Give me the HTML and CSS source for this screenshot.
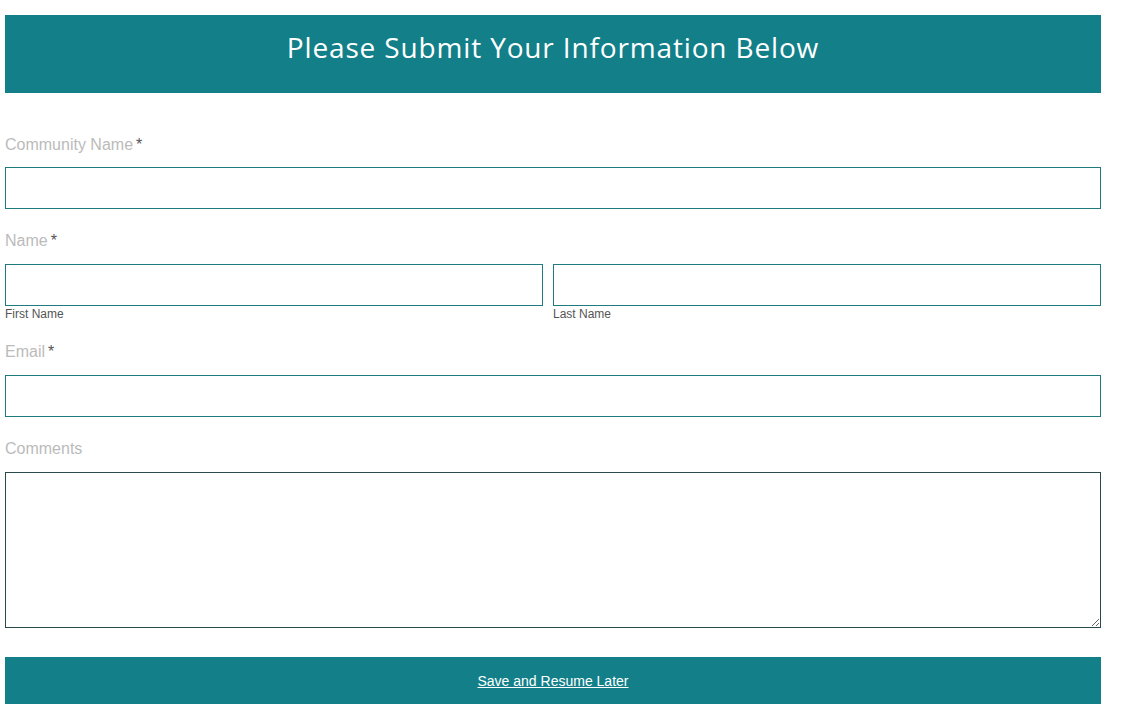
FILE: index.html
```html
<!DOCTYPE html>
<html lang="en">
<head>
    <meta charset="UTF-8">
    <meta name="viewport" content="width=device-width, initial-scale=1.0">
    <title>Submit Your Information</title>
    <link rel="stylesheet" href="styles.css">
</head>
<body>

    <div class="page">
        <div class="form-header">
            <h2>Please Submit Your Information Below</h2>
        </div>

        <form id="infoForm" class="info-form">
            <div class="form-group">
                <label for="community">Community Name<span class="req">*</span></label>
                <input type="text" id="community" name="community" required>
            </div>

            <div class="form-group name-group">
                <label for="firstName">Name<span class="req">*</span></label>
                <div class="name-row">
                    <div class="name-part">
                        <input type="text" id="firstName" name="firstName" required>
                        <span class="sub-label">First Name</span>
                    </div>
                    <div class="name-part">
                        <input type="text" id="lastName" name="lastName" required>
                        <span class="sub-label">Last Name</span>
                    </div>
                </div>
            </div>

            <div class="form-group">
                <label for="email">Email<span class="req">*</span></label>
                <input type="email" id="email" name="email" required>
            </div>

            <div class="form-group comments-group">
                <label for="comments">Comments</label>
                <textarea id="comments" name="comments"></textarea>
            </div>

            <div class="save-bar">
                <a href="#" class="save-link">Save and Resume Later</a>
            </div>
        </form>
    </div>

</body>
</html>
```

FILE: styles.css
```css
body {
    margin: 0;
    font-family: "Liberation Sans", Arial, sans-serif;
    background-color: #fff;
}
.page {
    width: 1096px;
    padding: 15px 0 0 5px;
}
.form-header {
    background-color: #127f89;
    height: 78px;
    display: flex;
    align-items: center;
    justify-content: center;
}
.form-header h2 {
    margin: 0 0 14px 0;
    font-family: "Open Sans", sans-serif;
    font-weight: 400;
    font-size: 28px;
    letter-spacing: 0.85px;
    color: #fff;
}
.info-form {
    padding-top: 41px;
}
.form-group {
    margin-bottom: 21px;
}
.form-group label {
    display: block;
    height: 20px;
    line-height: 20px;
    padding-top: 1px;
    margin-bottom: 12px;
    font-size: 16px;
    color: #bbb;
}
.form-group + .form-group label {
    margin-bottom: 13px;
}
.req {
    color: #555;
    margin-left: 3px;
}
.form-group input, .form-group textarea {
    display: block;
    box-sizing: border-box;
    width: 100%;
    height: 42px;
    margin: 0;
    border: 1px solid #1f7b80;
    border-radius: 0;
    background: #fff;
}
.form-group textarea {
    height: 156px;
    border-color: #29494c;
    resize: vertical;
}
.name-row {
    display: grid;
    grid-template-columns: 538px 1fr;
    gap: 10px;
}
.sub-label {
    display: block;
    height: 15px;
    line-height: 15px;
    padding-top: 1px;
    font-size: 12px;
    color: #555;
}
.name-group {
    margin-bottom: 19px;
}
.comments-group {
    margin-bottom: 29px;
}
.save-bar {
    background-color: #127f89;
    height: 47px;
    display: flex;
    align-items: center;
    justify-content: center;
}
.save-link {
    color: #fff;
    font-size: 14px;
    text-decoration: underline;
}
```
